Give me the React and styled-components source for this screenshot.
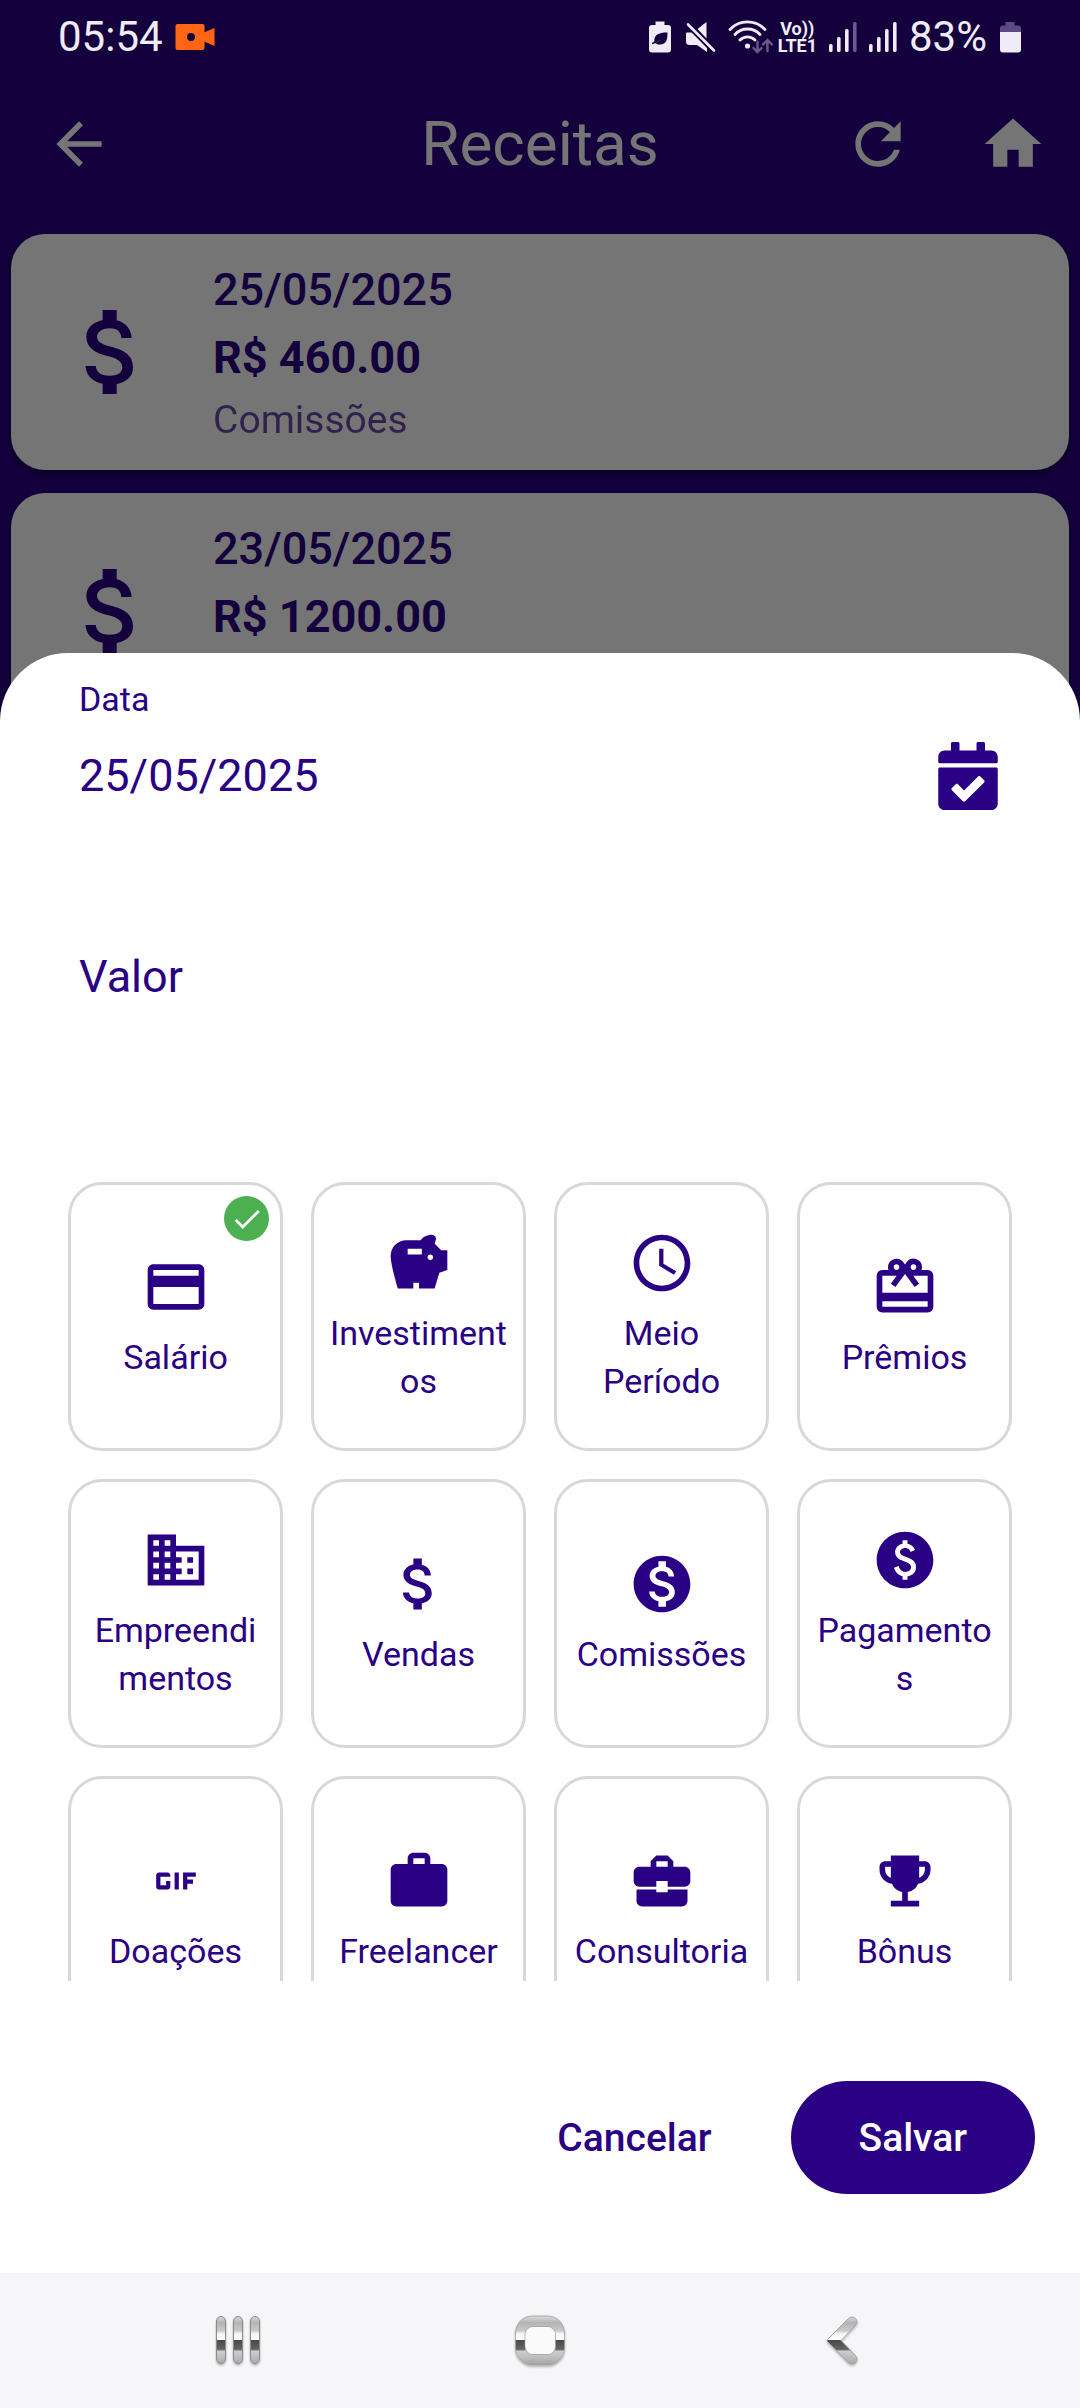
import React, { useState } from 'react';
import styled, { createGlobalStyle } from 'styled-components';
import {
  MdArrowBack, MdRefresh, MdHome, MdAttachMoney, MdCreditCard, MdSavings,
  MdAccessTime, MdCardGiftcard, MdBusiness, MdMonetizationOn, MdPaid, MdGif,
  MdWork, MdBusinessCenter, MdEmojiEvents, MdCheck,
} from 'react-icons/md';
import { FaCalendarCheck } from 'react-icons/fa';

const primary = '#2a0085';

const GlobalStyle = createGlobalStyle`
  *, *::before, *::after { box-sizing: border-box; }
  body {
    margin: 0;
    font-family: Roboto, "Noto Sans", sans-serif;
    color: ${primary};
    background: ${primary};
  }
  button, input { font: inherit; color: inherit; }
  svg { display: block; flex: none; }
`;

const Screen = styled.div`
  display: grid;
  grid-template-columns: minmax(0, 1fr);
  grid-template-rows: 74px minmax(0, 1fr) 135px;
  height: 100vh;
`;

/* ---- system bars ---- */

const StatusBar = styled.div`
  grid-area: 1 / 1;
  z-index: 2;
  display: flex;
  align-items: center;
  justify-content: space-between;
  padding: 0 58px;
  color: #efecf6;
  font-size: 42px;
  line-height: 48px;
`;

const StatusGroup = styled.div`
  display: flex;
  align-items: center;
  gap: ${(p) => p.$gap}px;
`;

const Carrier = styled.span`
  font-size: 18px;
  font-weight: 700;
  line-height: 17px;
  text-align: center;
`;

const NavBar = styled.nav`
  grid-area: 3 / 1;
  z-index: 2;
  display: grid;
  grid-template-columns: repeat(3, 1fr);
  padding: 0 8%;
  background: #f6f6f8;
`;

const NavButton = styled.button`
  display: flex;
  align-items: center;
  justify-content: center;
  border: 0;
  padding: 0;
  background: none;
`;

/* ---- page behind the sheet ---- */

const Page = styled.main`
  grid-area: 1 / 1 / 3 / 2;
  overflow: hidden;
  padding-top: 74px;
  background: ${primary};
`;

const Header = styled.header`
  display: grid;
  grid-template-columns: 1fr auto 1fr;
  align-items: center;
  height: 140px;
  color: #fff;
`;

const HeaderTitle = styled.h1`
  margin: 0;
  font-size: 62px;
  font-weight: 400;
  line-height: 72px;
`;

const HeaderSide = styled.div`
  display: flex;
  justify-content: ${(p) => (p.$end ? 'flex-end' : 'flex-start')};
  padding-left: ${(p) => (p.$end ? 0 : 11)}px;
`;

const IconButton = styled.button`
  display: grid;
  place-items: center;
  width: 135px;
  height: 105px;
  border: 0;
  padding: 0;
  background: none;
  font-size: 68px;
`;

const EntryList = styled.ul`
  display: flex;
  flex-direction: column;
  gap: 23px;
  margin: 0;
  padding: 20px 11px;
  list-style: none;
`;

const EntryCard = styled.li`
  display: flex;
  align-items: center;
  gap: 45px;
  padding: 22px 45px;
  border-radius: 34px;
  background: #fff;
  box-shadow: 0 4px 10px rgba(0, 0, 0, 0.4);
`;

const EntryText = styled.div`
  display: flex;
  flex-direction: column;
`;

const EntryLine = styled.span`
  font-size: 45px;
  font-weight: ${(p) => p.$weight};
  line-height: 68px;
`;

const EntryCategory = styled.span`
  font-size: 39px;
  line-height: 56px;
  opacity: 0.7;
`;

/* ---- bottom sheet ---- */

const Scrim = styled.div`
  grid-area: 1 / 1 / 3 / 2;
  z-index: 1;
  display: flex;
  flex-direction: column;
  justify-content: flex-end;
  min-height: 0;
  background: rgba(0, 0, 0, 0.54);
`;

const Sheet = styled.form`
  display: flex;
  flex-direction: column;
  min-height: 0;
  padding-top: 22px;
  border-radius: 68px 68px 0 0;
  background: #fff;
`;

const Field = styled.div`
  display: flex;
  flex-direction: column;
  padding: 0 45px 0 79px;
`;

const FieldLabel = styled.label`
  font-size: ${(p) => (p.$small ? 34 : 45)}px;
  line-height: ${(p) => (p.$small ? 48 : 68)}px;
`;

const FieldRow = styled.div`
  display: flex;
  align-items: center;
  margin-bottom: 115px;
`;

const FieldInput = styled.input`
  flex: 1;
  min-width: 0;
  min-height: 68px;
  border: 0;
  padding: 0;
  background: none;
  font-size: 45px;
  outline: none;
`;

const Categories = styled.fieldset`
  flex: 0 1 799px;
  display: grid;
  grid-template-columns: repeat(4, minmax(0, 1fr));
  grid-auto-rows: 269px;
  gap: 28px;
  min-height: 0;
  margin: 103px 0 0;
  border: 0;
  padding: 0 68px;
  overflow: auto;
  scrollbar-width: none;
`;

const CategoryTile = styled.label`
  position: relative;
  display: flex;
  flex-direction: column;
  align-items: center;
  justify-content: center;
  gap: 12px;
  border: 3px solid #d8d8da;
  border-radius: 34px;
  padding: 0 12px;
  font-size: 34px;
  line-height: 48px;
  text-align: center;
`;

const CategoryName = styled.span`
  max-width: 100%;
  overflow-wrap: anywhere;
`;

const HiddenRadio = styled.input`
  position: absolute;
  inset: 0;
  margin: 0;
  opacity: 0;
`;

const SelectedBadge = styled.span`
  position: absolute;
  top: 11px;
  right: 11px;
  display: grid;
  place-items: center;
  width: 45px;
  height: 45px;
  border-radius: 50%;
  background: #4caf50;
  color: #fff;
`;

const Actions = styled.div`
  display: flex;
  justify-content: flex-end;
  gap: 45px;
  padding: 100px 45px 79px;
`;

const ActionButton = styled.button`
  height: 113px;
  border: 0;
  border-radius: 57px;
  padding: 0 ${(p) => (p.$filled ? 68 : 34)}px;
  background: ${(p) => (p.$filled ? primary : 'none')};
  color: ${(p) => (p.$filled ? '#fff' : primary)};
  font-size: 39px;
  font-weight: 500;
`;

/* ---- system icons ---- */

const CameraIcon = () => (
  <svg width="40" height="28" viewBox="0 0 40 28" fill="#ff6614">
    <path fillRule="evenodd" d="M2.500 1h25a2 2 0 0 1 2 2v22a2 2 0 0 1-2 2h-25a2 2 0 0 1-2-2V3a2 2 0 0 1 2-2zM16 10a4 4 0 1 0 0 8 4 4 0 0 0 0-8z" />
    <path d="M29 9.500 39.500 5v18L29 18.500z" />
  </svg>
);

const LeafBatteryIcon = () => (
  <svg width="24" height="34" viewBox="0 0 24 34">
    <path fill="#efecf6" d="M7.500 1.500h9V5H20a3 3 0 0 1 3 3v21.500a3 3 0 0 1-3 3H4a3 3 0 0 1-3-3V8a3 3 0 0 1 3-3h3.500z" />
    <path fill="#15003f" d="M19.500 12.500c0 7-1 12-7.500 12-2 0-3.500-.6-4.500-1.600 2-.3 3.600-1.700 4.700-4.100-1.800 2.400-3.400 4.600-8.200 5.400v-1.400c.9-.2 1.600-.5 2.300-1C6 15 10 12.500 19.500 12.500z" />
  </svg>
);

const MuteIcon = () => (
  <svg width="32" height="34" viewBox="0 0 32 34" fill="#efecf6">
    <path d="M22.500 2v16.500L13.500 9zM3 12.500h5L23 27v5L13 25H5.500A3.500 3.500 0 0 1 2 21.500V13.500a1 1 0 0 1 1-1z" />
    <path d="M4 4.500 29.500 30.500" stroke="#15003f" strokeWidth="6" />
    <path d="M4 4.500 30 30.500" stroke="#efecf6" strokeWidth="2.600" strokeLinecap="round" />
  </svg>
);

const WifiIcon = () => (
  <svg width="46" height="34" viewBox="0 0 46 34" fill="none" stroke="#efecf6" strokeWidth="2.800" strokeLinecap="round">
    <path d="M2 9.500a24 24 0 0 1 35 0M7 14.500a17 17 0 0 1 25 0M12 20a10.500 10.500 0 0 1 15 0" />
    <circle cx="19.500" cy="26" r="2.600" fill="#efecf6" stroke="none" />
    <path stroke="#6b5a8c" strokeWidth="2.400" d="M29.500 22v10m-4-4 4 4 4-4M39.500 31V20m-4.500 4.500 4.500-4.500 4.500 4.500" />
  </svg>
);

const SignalIcon = ({ bars }) => (
  <svg width="28" height="34" viewBox="0 0 28 34">
    {[24, 17, 9, 2].map((top, i) => (
      <rect key={top} x={i * 8} y={top} width="3.600" height={32 - top} rx="1.600" fill={i < bars ? '#efecf6' : '#6b5a8c'} />
    ))}
  </svg>
);

const BatteryIcon = () => (
  <svg width="23" height="34" viewBox="0 0 23 34">
    <path fill="#5d4a80" d="M6.500 2h9v3.500H19a3 3 0 0 1 3 3V13H1V8.500a3 3 0 0 1 3-3h2.500z" />
    <path fill="#efecf6" d="M1 12h21v17.500a3 3 0 0 1-3 3H4a3 3 0 0 1-3-3z" />
  </svg>
);

const Metal = ({ id }) => (
  <defs>
    <linearGradient id={id} gradientUnits="userSpaceOnUse" x1="0" y1="3" x2="0" y2="52">
      <stop offset="0" stopColor="#dcdcdc" />
      <stop offset="0.14" stopColor="#b4b4b4" />
      <stop offset="0.3" stopColor="#c8c8c8" />
      <stop offset="0.36" stopColor="#f4f4f4" />
      <stop offset="0.48" stopColor="#fdfdfd" />
      <stop offset="0.5" stopColor="#4a4a4a" />
      <stop offset="0.68" stopColor="#636363" />
      <stop offset="0.72" stopColor="#cdcdcd" />
      <stop offset="0.88" stopColor="#b8b8b8" />
      <stop offset="1" stopColor="#a2a2a2" />
    </linearGradient>
    <filter id={`${id}-shadow`} x="-30%" y="-30%" width="160%" height="160%">
      <feDropShadow dx="0" dy="1.500" stdDeviation="1.200" floodColor="#000" floodOpacity="0.3" />
    </filter>
  </defs>
);

const RecentsIcon = () => (
  <svg width="56" height="56" viewBox="0 0 56 56">
    <Metal id="metal-recents" />
    <g fill="url(#metal-recents)" stroke="#8a8a8a" filter="url(#metal-recents-shadow)">
      {[6.5, 23.5, 40.5].map((x) => (
        <rect key={x} x={x} y="3.500" width="9" height="47" rx="4.500" />
      ))}
    </g>
  </svg>
);

const HomeKeyIcon = () => (
  <svg width="56" height="56" viewBox="0 0 56 56">
    <Metal id="metal-home" />
    <path
      fill="url(#metal-home)" stroke="#a0a0a0" strokeWidth="0.800" fillRule="evenodd" filter="url(#metal-home-shadow)"
      d="M20.500 3h15A17 17 0 0 1 52.500 20v15A17 17 0 0 1 35.500 52h-15A17 17 0 0 1 3.500 35V20A17 17 0 0 1 20.500 3zM21 13.500a8 8 0 0 0-8 8v12a8 8 0 0 0 8 8h14.500a8 8 0 0 0 8-8v-12a8 8 0 0 0-8-8z"
    />
    <rect x="13.500" y="14" width="29.500" height="27" rx="7.500" fill="#fafafb" />
  </svg>
);

const BackKeyIcon = () => (
  <svg width="56" height="56" viewBox="0 0 56 56">
    <Metal id="metal-back" />
    <path
      fill="url(#metal-back)" stroke="#9a9a9a" strokeWidth="0.800" filter="url(#metal-back-shadow)" strokeLinejoin="round"
      d="M34.500 5.500c2-2 5-2 7 0s2 5 0 7L27 27.500l14.500 15c2 2 2 5 0 7s-5 2-7 0L13.500 28.500a1.500 1.500 0 0 1 0-2z"
    />
  </svg>
);

const entries = [
  { date: '25/05/2025', amount: 'R$ 460.00', category: 'Comissões' },
  { date: '23/05/2025', amount: 'R$ 1200.00', category: 'Salário' },
];

const categories = [
  ['Salário', MdCreditCard],
  ['Investimentos', MdSavings],
  ['Meio Período', MdAccessTime],
  ['Prêmios', MdCardGiftcard],
  ['Empreendimentos', MdBusiness],
  ['Vendas', MdAttachMoney],
  ['Comissões', MdMonetizationOn],
  ['Pagamentos', MdPaid],
  ['Doações', MdGif],
  ['Freelancer', MdWork],
  ['Consultoria', MdBusinessCenter],
  ['Bônus', MdEmojiEvents],
];

export default function App() {
  const [selected, setSelected] = useState('Salário');
  const [date, setDate] = useState('25/05/2025');
  const [amount, setAmount] = useState('');

  return (
    <Screen>
      <GlobalStyle />

      <StatusBar>
        <StatusGroup $gap={12}>
          <span>05:54</span>
          <CameraIcon />
        </StatusGroup>
        <StatusGroup $gap={12}>
          <LeafBatteryIcon />
          <MuteIcon />
          <StatusGroup $gap={4}>
            <WifiIcon />
            <Carrier>Vo))<br />LTE1</Carrier>
          </StatusGroup>
          <SignalIcon bars={3} />
          <SignalIcon bars={4} />
          <StatusGroup $gap={12}>
            <span>83%</span>
            <BatteryIcon />
          </StatusGroup>
        </StatusGroup>
      </StatusBar>

      <Page>
        <Header>
          <HeaderSide>
            <IconButton type="button" aria-label="Voltar"><MdArrowBack /></IconButton>
          </HeaderSide>
          <HeaderTitle>Receitas</HeaderTitle>
          <HeaderSide $end>
            <IconButton type="button" aria-label="Atualizar"><MdRefresh /></IconButton>
            <IconButton type="button" aria-label="Início"><MdHome /></IconButton>
          </HeaderSide>
        </Header>
        <EntryList>
          {entries.map((e) => (
            <EntryCard key={e.date}>
              <MdAttachMoney size={112} />
              <EntryText>
                <EntryLine $weight={500}>{e.date}</EntryLine>
                <EntryLine $weight={700}>{e.amount}</EntryLine>
                <EntryCategory>{e.category}</EntryCategory>
              </EntryText>
            </EntryCard>
          ))}
        </EntryList>
      </Page>

      <Scrim>
        <Sheet onSubmit={(e) => e.preventDefault()}>
          <Field>
            <FieldLabel htmlFor="data" $small>Data</FieldLabel>
            <FieldRow>
              <FieldInput id="data" value={date} onChange={(e) => setDate(e.target.value)} />
              <IconButton type="button" aria-label="Escolher data"><FaCalendarCheck /></IconButton>
            </FieldRow>
            <FieldLabel htmlFor="valor">Valor</FieldLabel>
            <FieldInput id="valor" inputMode="decimal" value={amount} onChange={(e) => setAmount(e.target.value)} />
          </Field>

          <Categories aria-label="Categoria">
            {categories.map(([name, Icon]) => (
              <CategoryTile key={name}>
                <HiddenRadio
                  type="radio" name="categoria" value={name}
                  checked={selected === name} onChange={() => setSelected(name)}
                />
                <Icon size={68} />
                <CategoryName>{name}</CategoryName>
                {selected === name && <SelectedBadge><MdCheck size={34} /></SelectedBadge>}
              </CategoryTile>
            ))}
          </Categories>

          <Actions>
            <ActionButton type="button">Cancelar</ActionButton>
            <ActionButton type="submit" $filled>Salvar</ActionButton>
          </Actions>
        </Sheet>
      </Scrim>

      <NavBar>
        <NavButton type="button" aria-label="Recentes"><RecentsIcon /></NavButton>
        <NavButton type="button" aria-label="Tela inicial"><HomeKeyIcon /></NavButton>
        <NavButton type="button" aria-label="Retornar"><BackKeyIcon /></NavButton>
      </NavBar>
    </Screen>
  );
}
